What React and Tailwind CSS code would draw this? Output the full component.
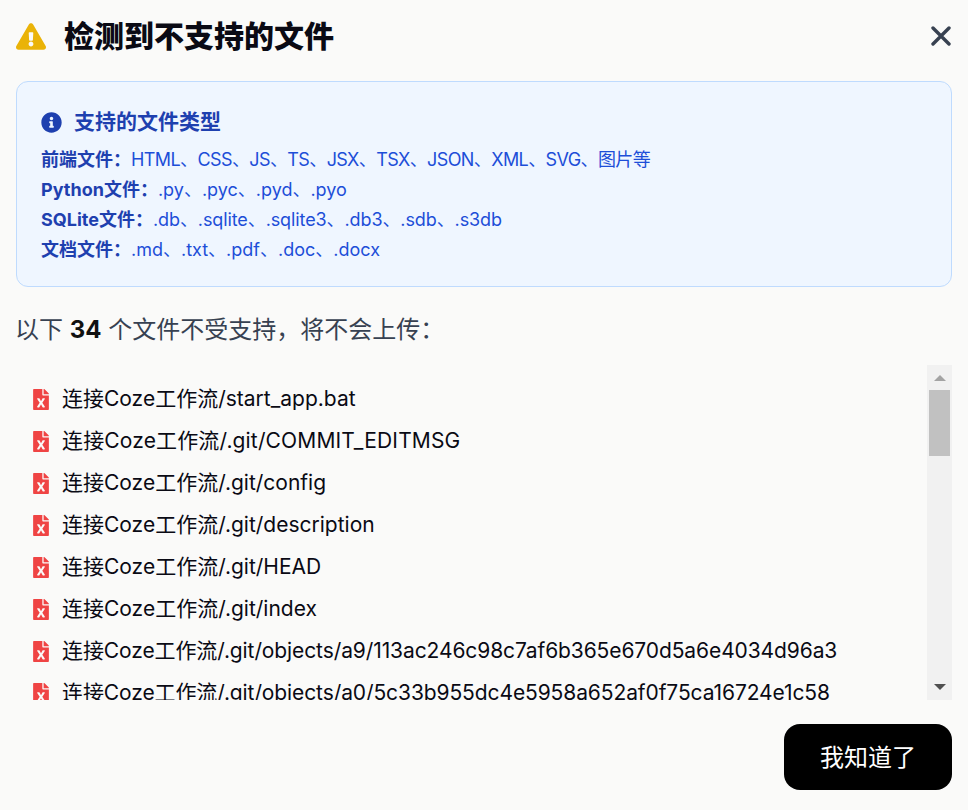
import { FaExclamationTriangle, FaInfoCircle, FaFileExcel } from 'react-icons/fa';

const types = [
  ['前端文件：', 'HTML、CSS、JS、TS、JSX、TSX、JSON、XML、SVG、图片等', 'tracking-[-0.6px]'],
  ['Python文件：', '.py、.pyc、.pyd、.pyo', ''],
  ['SQLite文件：', '.db、.sqlite、.sqlite3、.db3、.sdb、.s3db', 'tracking-[-0.1px]'],
  ['文档文件：', '.md、.txt、.pdf、.doc、.docx', ''],
];

const files = [
  ['连接Coze工作流/start_app.bat', ''],
  ['连接Coze工作流/.git/COMMIT_EDITMSG', 'tracking-[0.15px]'],
  ['连接Coze工作流/.git/config', ''],
  ['连接Coze工作流/.git/description', ''],
  ['连接Coze工作流/.git/HEAD', ''],
  ['连接Coze工作流/.git/index', ''],
  ['连接Coze工作流/.git/objects/a9/113ac246c98c7af6b365e670d5a6e4034d96a3', 'tracking-[-0.1px]'],
  ['连接Coze工作流/.git/objects/a0/5c33b955dc4e5958a652af0f75ca16724e1c58', 'tracking-[-0.1px]'],
];

export default function App() {
  return (
    <div className="h-[810px] overflow-hidden bg-[#fafaf9] px-4 font-['Inter','Noto_Sans_CJK_SC',sans-serif]">
      {/* Header */}
      <header className="flex h-[81px] items-center justify-between pb-[9px]">
        <div className="flex items-center gap-[18px]">
          <FaExclamationTriangle className="h-[27px] w-[30px] text-[#eab308]" />
          <h1 className="text-[30px] font-black text-[#0a0a14]">检测到不支持的文件</h1>
        </div>
        <svg viewBox="0 0 20 20" className="mr-[1px] h-5 w-5 text-[#374151]" fill="none" stroke="currentColor" strokeWidth="3.4" strokeLinecap="round">
          <path d="M2 2 18 18M18 2 2 18" />
        </svg>
      </header>

      {/* Supported types */}
      <section className="h-[206px] rounded-xl border border-[#bfdbfe] bg-[#eff6ff] px-6 pt-[23px]">
        <div className="flex h-[34px] items-center gap-3">
          <FaInfoCircle className="h-[21px] w-[21px] text-[#1e40af]" />
          <h2 className="text-[21px] font-bold text-[#1e40af]">支持的文件类型</h2>
        </div>
        <div className="mt-[6px]">
          {types.map(([label, value, cls]) => (
            <p key={label} className="h-[30px] text-[18px] leading-[30px] text-[#1d4ed8]">
              <strong className="font-bold text-[#1e40af]">{label}</strong>
              <span className={cls}>{value}</span>
            </p>
          ))}
        </div>
      </section>

      <p className="mt-[25px] h-[35px] -ml-[1px] text-2xl leading-[35px] text-[#374151]">
        以下 <strong className="font-bold text-[#111111]">34</strong> 个文件不受支持，将不会上传：
      </p>

      {/* File list with scrollbar */}
      <div className="mt-[18px] flex h-[335px]">
        <ul className="flex-1 overflow-hidden pl-[17px] pt-[13px]">
          {files.map(([f, cls]) => (
            <li key={f} className="flex h-[42px] items-center gap-[13px] text-[21px] whitespace-nowrap text-[#0a0a14]">
              <FaFileExcel className="h-[21px] w-[16px] shrink-0 text-[#ef4444]" />
              <span className={cls}>{f}</span>
            </li>
          ))}
        </ul>
        <div className="flex w-[25px] flex-col items-center bg-[#f1f1f1]">
          <div className="mt-[10px] h-0 w-0 border-x-[6px] border-b-[6px] border-x-transparent border-b-[#a3a3a3]" />
          <div className="mt-[9px] h-[66px] w-[21px] bg-[#c1c1c1]" />
          <div className="mt-auto mb-[10px] h-0 w-0 border-x-[6px] border-t-[6px] border-x-transparent border-t-[#505050]" />
        </div>
      </div>

      {/* Footer */}
      <div className="mt-6 flex justify-end">
        <button className="h-[66px] w-[168px] rounded-2xl bg-black pt-[2px] text-2xl text-white">我知道了</button>
      </div>
    </div>
  );
}
